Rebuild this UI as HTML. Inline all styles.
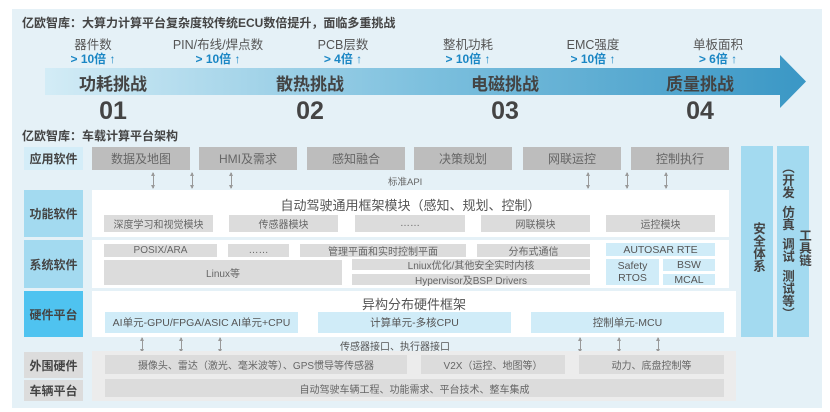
<!DOCTYPE html>
<html><head><meta charset="utf-8"><style>
*{margin:0;padding:0;box-sizing:border-box}
body{width:830px;height:412px;background:#fff;position:relative;overflow:hidden;font-family:"Liberation Sans","Noto Sans CJK SC",sans-serif;color:#555}
.a{position:absolute}
.c{position:absolute;display:flex;align-items:center;justify-content:center;text-align:center;white-space:nowrap}
.g{background:#bdbdbd;color:#666;font-size:12px}
.m{background:#dcdcdc;color:#666;font-size:10px}
.lb{background:#d0ecf8;color:#555;font-size:10.5px}
.lab{font-weight:bold;font-size:12px;color:#444}
.t{font-weight:bold;font-size:12px;color:#444}
.met{position:absolute;width:120px;text-align:center}
.met .l{font-size:12.5px;color:#555;line-height:14px}
.met .v{font-size:12px;color:#1a86c4;font-weight:bold;line-height:14px}
.ch{position:absolute;width:140px;text-align:center;font-weight:bold;font-size:17px;color:#444}
.num{position:absolute;width:100px;text-align:center;font-weight:bold;font-size:25px;color:#444}
.ar{position:absolute;width:1px;background:#999}
.ar:before,.ar:after{content:"";position:absolute;left:-2px;border-left:2.5px solid transparent;border-right:2.5px solid transparent}
.ar:before{top:-1px;border-bottom:4px solid #999}
.ar:after{bottom:-1px;border-top:4px solid #999}
</style></head><body>
<div class="a" style="left:12px;top:9px;width:810px;height:399px;background:#e5f1f7"></div>
<div class="a t" style="left:22px;top:14px">亿欧智库：大算力计算平台复杂度较传统ECU数倍提升，面临多重挑战</div>

<div class="met" style="left:33px;top:38px"><div class="l">器件数</div><div class="v">&gt; 10倍 ↑</div></div>
<div class="met" style="left:158px;top:38px"><div class="l">PIN/布线/焊点数</div><div class="v">&gt; 10倍 ↑</div></div>
<div class="met" style="left:283px;top:38px"><div class="l">PCB层数</div><div class="v">&gt; 4倍 ↑</div></div>
<div class="met" style="left:408px;top:38px"><div class="l">整机功耗</div><div class="v">&gt; 10倍 ↑</div></div>
<div class="met" style="left:533px;top:38px"><div class="l">EMC强度</div><div class="v">&gt; 10倍 ↑</div></div>
<div class="met" style="left:658px;top:38px"><div class="l">单板面积</div><div class="v">&gt; 6倍 ↑</div></div>

<svg class="a" style="left:45px;top:54px" width="765" height="56">
<defs><linearGradient id="gr" x1="0" x2="1"><stop offset="0" stop-color="#d3ecf6"/><stop offset="0.5" stop-color="#7dc0de"/><stop offset="1" stop-color="#3a97c5"/></linearGradient></defs>
<polygon points="0,14 735,14 735,1 761,27.5 735,54 735,41 0,41" fill="url(#gr)"/>
</svg>
<div class="ch" style="left:43px;top:70px">功耗挑战</div>
<div class="ch" style="left:240px;top:70px">散热挑战</div>
<div class="ch" style="left:435px;top:70px">电磁挑战</div>
<div class="ch" style="left:630px;top:70px">质量挑战</div>
<div class="num" style="left:63px;top:97px">01</div>
<div class="num" style="left:260px;top:97px">02</div>
<div class="num" style="left:455px;top:97px">03</div>
<div class="num" style="left:650px;top:97px">04</div>

<div class="a t" style="left:22px;top:127px">亿欧智库：车载计算平台架构</div>

<div class="c lab" style="left:24px;top:147px;width:59px;height:23px;background:#d4edf8">应用软件</div>
<div class="c lab" style="left:24px;top:190px;width:59px;height:47px;background:#a3daf0">功能软件</div>
<div class="c lab" style="left:24px;top:240px;width:59px;height:48px;background:#a3daf0">系统软件</div>
<div class="c lab" style="left:24px;top:291px;width:59px;height:46px;background:#4fc3f0">硬件平台</div>
<div class="c lab" style="left:24px;top:352px;width:59px;height:26px;background:#dcdcdc">外围硬件</div>
<div class="c lab" style="left:24px;top:380px;width:59px;height:21px;background:#dcdcdc">车辆平台</div>

<div class="c g" style="left:92px;top:147px;width:98px;height:23px">数据及地图</div>
<div class="c g" style="left:199px;top:147px;width:98px;height:23px">HMI及需求</div>
<div class="c g" style="left:307px;top:147px;width:98px;height:23px">感知融合</div>
<div class="c g" style="left:414px;top:147px;width:98px;height:23px">决策规划</div>
<div class="c g" style="left:523px;top:147px;width:98px;height:23px">网联运控</div>
<div class="c g" style="left:631px;top:147px;width:98px;height:23px">控制执行</div>
<div class="ar" style="left:153px;top:173px;height:15px"></div>
<div class="ar" style="left:192px;top:173px;height:15px"></div>
<div class="ar" style="left:231px;top:173px;height:15px"></div>
<div class="ar" style="left:588px;top:173px;height:15px"></div>
<div class="ar" style="left:627px;top:173px;height:15px"></div>
<div class="ar" style="left:666px;top:173px;height:15px"></div>
<div class="a" style="left:388px;top:174px;font-size:9.5px;color:#666">标准API</div>

<div class="a" style="left:92px;top:190px;width:637px;height:47px;background:#fff"></div>
<div class="a" style="left:92px;top:195px;width:637px;text-align:center;font-size:13px;color:#555">自动驾驶通用框架模块（感知、规划、控制）</div>
<div class="c m" style="left:104px;top:215px;width:109px;height:17px">深度学习和视觉模块</div>
<div class="c m" style="left:229px;top:215px;width:109px;height:17px">传感器模块</div>
<div class="c m" style="left:355px;top:215px;width:110px;height:17px">……</div>
<div class="c m" style="left:481px;top:215px;width:109px;height:17px">网联模块</div>
<div class="c m" style="left:606px;top:215px;width:109px;height:17px">运控模块</div>

<div class="a" style="left:92px;top:240px;width:637px;height:48px;background:#fff"></div>
<div class="c m" style="left:104px;top:244px;width:113px;height:13px">POSIX/ARA</div>
<div class="c m" style="left:228px;top:244px;width:61px;height:13px">……</div>
<div class="c m" style="left:300px;top:244px;width:166px;height:13px">管理平面和实时控制平面</div>
<div class="c m" style="left:477px;top:244px;width:113px;height:13px">分布式通信</div>
<div class="c lb" style="left:606px;top:243px;width:109px;height:13px">AUTOSAR RTE</div>
<div class="c m" style="left:104px;top:260px;width:238px;height:25px">Linux等</div>
<div class="c m" style="left:352px;top:259px;width:238px;height:11px">Lniux优化/其他安全实时内核</div>
<div class="c m" style="left:352px;top:274px;width:238px;height:11px">Hypervisor及BSP Drivers</div>
<div class="c lb" style="left:606px;top:259px;width:53px;height:26px;white-space:normal;line-height:12px">Safety RTOS</div>
<div class="c lb" style="left:663px;top:259px;width:52px;height:12px">BSW</div>
<div class="c lb" style="left:663px;top:274px;width:52px;height:11px">MCAL</div>

<div class="a" style="left:92px;top:291px;width:644px;height:46px;background:#fff"></div>
<div class="a" style="left:92px;top:294px;width:644px;text-align:center;font-size:13px;color:#555">异构分布硬件框架</div>
<div class="c lb" style="left:105px;top:312px;width:193px;height:21px">AI单元-GPU/FPGA/ASIC AI单元+CPU</div>
<div class="c lb" style="left:318px;top:312px;width:193px;height:21px">计算单元-多核CPU</div>
<div class="c lb" style="left:531px;top:312px;width:193px;height:21px">控制单元-MCU</div>
<div class="ar" style="left:142px;top:338px;height:14px"></div>
<div class="ar" style="left:181px;top:338px;height:14px"></div>
<div class="ar" style="left:220px;top:338px;height:14px"></div>
<div class="ar" style="left:580px;top:338px;height:14px"></div>
<div class="ar" style="left:619px;top:338px;height:14px"></div>
<div class="ar" style="left:658px;top:338px;height:14px"></div>
<div class="a" style="left:340px;top:338px;font-size:10px;color:#555">传感器接口、执行器接口</div>

<div class="a" style="left:92px;top:351px;width:644px;height:50px;background:#ececec"></div>
<div class="c m" style="left:105px;top:355px;width:302px;height:19px">摄像头、雷达（激光、毫米波等）、GPS惯导等传感器</div>
<div class="c m" style="left:421px;top:355px;width:144px;height:19px">V2X（运控、地图等）</div>
<div class="c m" style="left:579px;top:355px;width:145px;height:19px">动力、底盘控制等</div>
<div class="c m" style="left:105px;top:379px;width:619px;height:18px">自动驾驶车辆工程、功能需求、平台技术、整车集成</div>

<div class="a" style="left:741px;top:146px;width:32px;height:191px;background:#a3daf0"></div>
<div class="a" style="left:777px;top:146px;width:32px;height:191px;background:#a3daf0"></div>
<div class="a" style="left:749px;top:222px;writing-mode:vertical-rl;font-weight:bold;font-size:12.5px;color:#444">安全体系</div>
<div class="a" style="left:780px;top:161px;writing-mode:vertical-rl;font-weight:bold;font-size:12.5px;color:#444;line-height:13px">（开发&nbsp;&nbsp;仿真&nbsp;&nbsp;调试&nbsp;&nbsp;测试等）</div>
<div class="a" style="left:795px;top:229px;writing-mode:vertical-rl;font-weight:bold;font-size:12.5px;color:#444">工具链</div>
</body></html>
